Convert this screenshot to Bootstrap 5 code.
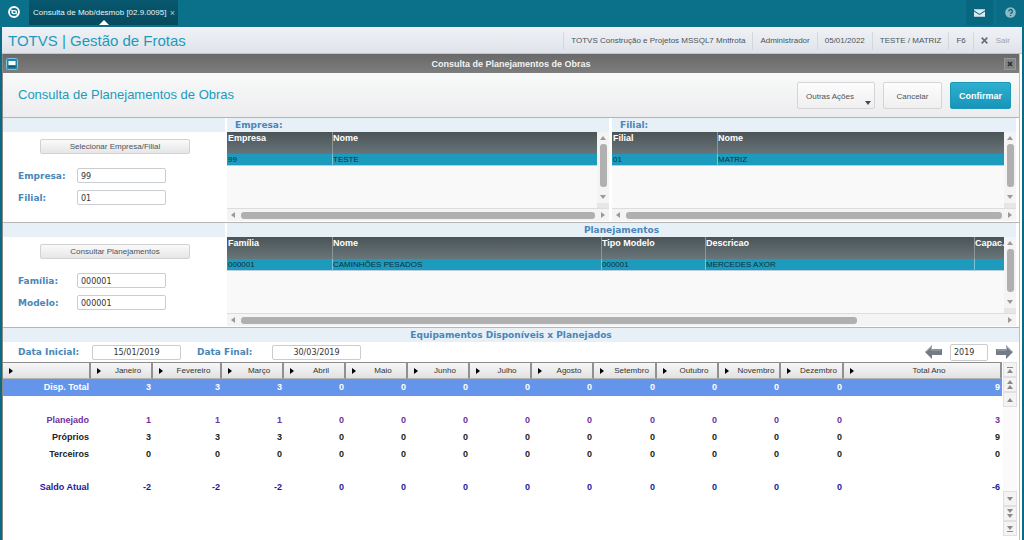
<!DOCTYPE html>
<html lang="pt-BR">
<head>
<meta charset="utf-8">
<meta name="viewport" content="width=device-width, initial-scale=1">
<title>Consulta de Planejamentos de Obras</title>
<link href="https://cdn.jsdelivr.net/npm/bootstrap@5.3.0/dist/css/bootstrap.min.css" rel="stylesheet">
<style>
:root{--teal:#0b718a;--sky:#1c9bbd;--strip:#e7eff7;--line:#b3b6b9;--lbl:#4a86b8}
body{font:8px/12px "Liberation Sans",Arial,sans-serif;color:#4c5459;background:#fff}
svg{display:block}

/* top bar */
.shell{min-height:100vh}
.topbar{height:27px;background:var(--teal);padding-left:8px}
.brand{margin-top:6px}
.tab{width:149px;height:25px;background:linear-gradient(#07586f,#064a5d);color:#e9f4f7;margin-left:9px;padding:0 3px 0 4px}
.tab::after{content:"";position:absolute;left:70px;bottom:0;border:5px solid transparent;border-top:0;border-bottom-color:#fff}
.tab button{font-size:9px;line-height:8px;color:#a9ccd6;padding:0}
.tool{width:27px;height:25px;background:#086780;border:0;padding:0}
.tool + .tool{background:#0a6c85}
.frame{border:solid #0b6a84;border-width:0 2px;background:#fff}
.appbar{height:26px;margin-top:1px;background:linear-gradient(#eff1f5,#e0e4ea);border-bottom:1px solid #c3c7cb}
.appname{font-size:15px;line-height:24px;color:var(--sky);padding-left:6px}
.meta > *{padding:0 7px;border-left:1px solid #d3d8de;line-height:18px;height:18px}
.meta a{color:#9ca3ac;text-decoration:none;padding-right:12px}

/* window */
.win{margin-right:2px;border-left:1px solid #888;border-right:1px solid #b9c2c6}
.wintitle{height:19px;background:linear-gradient(#696969,#7d7d7d);font-weight:700;padding:0 3px}
.wintitle span{font-size:9px;color:#f2f2f2}
.winx{width:12px;height:12px;border:1px solid #989898;background:#838383;padding:0}
.head{height:45px;background:linear-gradient(#f8f9f9,#ededef);border-bottom:1px solid var(--line);padding:0 8px 0 15px}
.head h1{font-size:13px;line-height:16px;color:var(--sky);margin:0;font-weight:400}
.head .btn{font-size:8px;line-height:27px;height:27px;border-radius:2px;border:1px solid #d5d5d7;color:#4c5459;background:linear-gradient(#fdfdfd,#efefef)}
.head .btn-ok{background:linear-gradient(#2fb0d0,#1795b9);border-color:#1c96b9;color:#fff;font-weight:700;font-size:9px}
.head .b-more{width:78px;text-align:left}
.head .b-can{width:59px}
.more{margin:0 3px 3px 0}
.head .more{border-top-color:#444c52}

/* sections */
.sec{border-bottom:1px solid var(--line);min-height:105px}
.side{flex:0 0 222px}
.g-emp{flex:0 0 37.6%;min-width:0;margin:0 3px 0 2px}
.g-fil{flex:1 1 0;min-width:0;margin-right:3px}
.g-plan{flex:1 1 0;min-width:0;margin:0 3px 0 2px}
.band{height:14px;background:var(--strip);color:var(--lbl);font:700 9px/14px "DejaVu Sans",Verdana,sans-serif}
.wide{display:block;width:150px;height:15px;font-size:8px;line-height:13px;border:1px solid #d2d2d4;border-radius:2px;background:linear-gradient(#fafafa,#e6e6e8);color:#4c5459;padding:0;margin:7px 0 14px 37px}
.lab{font:700 9px/14px "DejaVu Sans",Verdana,sans-serif;color:var(--lbl)}
.fld{width:89px;height:15px;border:1px solid #c9cdd1;border-radius:2px;background:#fff;color:#333;font:8px/13px "DejaVu Sans",Verdana,sans-serif;padding:1px 3px 0}
.frow{margin:0 0 7px 15px;height:15px}
.frow .lab{width:59px}

/* record grids */
.gridbody{height:76px;background:#f9f9f9}
.browse{table-layout:fixed;width:100%;border-collapse:separate;border-spacing:0}
.browse th,.browse td{padding:0;white-space:nowrap;overflow:hidden;border-left:1px solid #8c9698}
.browse th{height:22px;background:linear-gradient(#4b5456,#68757a);color:#fff;font-size:9px;line-height:12px;vertical-align:top}
.browse td{height:12px;background:var(--sky);color:#10303c;font-size:8px;line-height:11px;border-color:#7fc1d3;border-bottom:1px solid #bcd}
.browse th:first-child,.browse td:first-child{border-left:0;padding-left:1px}
.c104{width:104px}.c105{width:105px}.c269{width:269px}
.vs{flex:0 0 12px;background:#f4f4f4;padding:4px 0 0;border-bottom:5px solid #e6e6e6}
.hs{height:13px;background:#f4f4f4;border-top:1px solid #ddd;padding:0 4px}
.thumb-v{width:7px;height:43px;border-radius:3px;background:#b0b0b0}
.thumb-h{height:7px;border-radius:3px;background:#b0b0b0}
.hgap{margin:0 6px}
.part{width:81%}
.tri{border:3px solid transparent;width:0;height:0}
.up{border-top:0;border-bottom:4px solid #9a9a9a}
.dn{border-bottom:0;border-top:4px solid #9a9a9a}
.lf{border-left:0;border-right:4px solid #9a9a9a}
.rt{border-right:0;border-left:4px solid #9a9a9a}

/* monthly plan */
.dates{height:20px;padding:0 6px 0 15px}
.l1{width:74px}
.l2{width:75px;margin-left:16px}
.yr{width:38px;height:17px}
.arrow{border:0;background:none;padding:0;line-height:0}
.plan{table-layout:fixed;width:100%;border-collapse:separate;border-spacing:0}
.plan thead th{height:17px;background:linear-gradient(#f7f7f7,#e2e2e2);border-top:1px solid #8b8b8b;border-right:2px solid #909090;border-bottom:1px solid #b5b5b5;font-weight:400;font-size:8px;line-height:14px;color:#333;text-align:center;padding:0 0 0 14px;position:relative}
.plan thead th::before{content:"";position:absolute;left:6px;top:5px;border:3px solid transparent;border-right:0;border-left:4px solid #000}
.plan tbody tr{height:17px}
.plan tbody tr.gap-row{height:16px}
.plan tbody th,.plan tbody td{font-weight:700;font-size:9px;line-height:15px;padding:0 2px 0 0;text-align:right}
.plan .sel > *{background:#6595ea;color:#fff}
.plan .c-plan > *{color:#7030a0}
.plan .c-blk > *{color:#222}
.plan .c-saldo > *{color:#1a1a9c}
.p88{width:88px}.p62{width:62px}.p63{width:63px}.p69{width:69px}
.steps{flex:0 0 14px;background:#fafafa;margin:0 2px 0 1px}
.steps button{width:14px;height:15px;border:1px solid #e0e0e0;background:#f3f3f3;padding:0;display:flex;align-items:center;justify-content:center}
</style>
</head>
<body>
<div class="shell d-flex flex-column">
<nav class="topbar d-flex align-items-start">
  <svg class="brand" width="12" height="12" viewBox="0 0 12 12"><circle cx="6" cy="6" r="5" fill="none" stroke="#fff" stroke-width="1.800"/><ellipse cx="6.200" cy="6.100" rx="2.300" ry="1.500" fill="none" stroke="#fff" stroke-width="1.300"/><path d="M1.500 3.500L5 4.700M7.500 7.500L10.500 8.500" stroke="#fff" stroke-width="1.200"/></svg>
  <div class="tab position-relative d-flex align-items-center justify-content-between"><span>Consulta de Mob/desmob [02.9.0095]</span><button class="btn border-0" aria-label="Fechar aba">×</button></div>
  <div class="ms-auto d-flex gap-1">
    <button class="tool d-flex align-items-center justify-content-center" aria-label="Mensagens"><svg width="11" height="8" viewBox="0 0 12 8"><path d="M0 0h12v1L6 5 0 1zM0 2.300l6 4 6-4V8H0z" fill="#dcebf0"/></svg></button>
    <button class="tool d-flex align-items-center justify-content-center" aria-label="Ajuda"><svg width="11" height="11" viewBox="0 0 11 11"><circle cx="5.500" cy="5.500" r="5.300" fill="#8dbac7"/><path d="M3.800 4.400a1.800 1.800 0 1 1 2.600 1.500c-.6.3-.8.5-.8 1.100M5.600 8v1.100" fill="none" stroke="#086780" stroke-width="1.300"/></svg></button>
  </div>
</nav>
<div class="frame flex-grow-1 d-flex flex-column">
<header class="appbar d-flex align-items-center justify-content-between">
  <span class="appname">TOTVS | Gestão de Frotas</span>
  <div class="meta d-flex">
    <span>TOTVS Construção e Projetos MSSQL7 Mntfrota</span><span>Administrador</span><span>05/01/2022</span><span>TESTE / MATRIZ</span><span>F6</span>
    <a href="#" class="d-flex align-items-center gap-2"><svg width="7" height="7" viewBox="0 0 7 7"><path d="M.7.7l5.600 5.600M6.300.7L.7 6.300" stroke="#68707a" stroke-width="1.700"/></svg>Sair</a>
  </div>
</header>
<main class="win flex-grow-1 d-flex flex-column">
  <div class="wintitle d-flex align-items-center justify-content-between">
    <svg width="12" height="12" viewBox="0 0 12 12"><rect x=".5" y=".5" width="11" height="11" rx="1" fill="#1c87a8" stroke="#7cc3d8"/><path d="M2.500 3h7v4h-7z" fill="#fff"/><path d="M2.500 8h7v1.500h-7z" fill="#0c5b76"/></svg>
    <span>Consulta de Planejamentos de Obras</span>
    <button class="winx d-flex align-items-center justify-content-center" aria-label="Fechar"><svg width="6" height="6" viewBox="0 0 6 6"><path d="M1 1l4 4M5 1L1 5" stroke="#222c3a" stroke-width="1.600"/></svg></button>
  </div>
  <div class="head d-flex align-items-center justify-content-between">
    <h1>Consulta de Planejamentos de Obras</h1>
    <div class="d-flex gap-2">
      <button class="btn position-relative py-0 ps-2 b-more">Outras Ações<span class="tri dn position-absolute bottom-0 end-0 more"></span></button>
      <button class="btn py-0 b-can">Cancelar</button>
      <button class="btn btn-ok py-0 px-2">Confirmar</button>
    </div>
  </div>

  <section class="sec d-flex">
    <div class="side">
      <div class="band"></div>
      <button class="wide">Selecionar Empresa/Filial</button>
      <div class="frow d-flex align-items-center"><label class="lab" for="emp">Empresa:</label><input class="fld" id="emp" value="99"></div>
      <div class="frow d-flex align-items-center"><label class="lab" for="fil">Filial:</label><input class="fld" id="fil" value="01"></div>
    </div>
    <div class="g-emp">
      <div class="band ps-2">Empresa:</div>
      <div class="gridbody d-flex">
        <div class="flex-fill overflow-hidden"><table class="browse"><colgroup><col class="c105"><col></colgroup><thead><tr><th>Empresa</th><th>Nome</th></tr></thead><tbody><tr><td>99</td><td>TESTE</td></tr></tbody></table></div>
        <div class="vs d-flex flex-column align-items-center"><span class="tri up"></span><span class="thumb-v my-1"></span><span class="tri dn mt-1"></span></div>
      </div>
      <div class="hs d-flex align-items-center"><span class="tri lf"></span><span class="thumb-h flex-grow-1 hgap"></span><span class="tri rt"></span></div>
    </div>
    <div class="g-fil">
      <div class="band ps-2">Filial:</div>
      <div class="gridbody d-flex">
        <div class="flex-fill overflow-hidden"><table class="browse"><colgroup><col class="c105"><col></colgroup><thead><tr><th>Filial</th><th>Nome</th></tr></thead><tbody><tr><td>01</td><td>MATRIZ</td></tr></tbody></table></div>
        <div class="vs d-flex flex-column align-items-center"><span class="tri up"></span><span class="thumb-v my-1"></span><span class="tri dn mt-1"></span></div>
      </div>
      <div class="hs d-flex align-items-center"><span class="tri lf"></span><span class="thumb-h flex-grow-1 hgap"></span><span class="tri rt"></span></div>
    </div>
  </section>

  <section class="sec d-flex">
    <div class="side">
      <div class="band"></div>
      <button class="wide">Consultar Planejamentos</button>
      <div class="frow d-flex align-items-center"><label class="lab" for="fam">Família:</label><input class="fld" id="fam" value="000001"></div>
      <div class="frow d-flex align-items-center"><label class="lab" for="mod">Modelo:</label><input class="fld" id="mod" value="000001"></div>
    </div>
    <div class="g-plan">
      <div class="band text-center">Planejamentos</div>
      <div class="gridbody d-flex">
        <div class="flex-fill overflow-hidden"><table class="browse"><colgroup><col class="c105"><col class="c269"><col class="c104"><col class="c269"><col></colgroup><thead><tr><th>Família</th><th>Nome</th><th>Tipo Modelo</th><th>Descricao</th><th>Capac.</th></tr></thead><tbody><tr><td>000001</td><td>CAMINHÕES PESADOS</td><td>000001</td><td>MERCEDES AXOR</td><td></td></tr></tbody></table></div>
        <div class="vs d-flex flex-column align-items-center"><span class="tri up"></span><span class="thumb-v my-1"></span><span class="tri dn mt-1"></span></div>
      </div>
      <div class="hs d-flex align-items-center"><span class="tri lf"></span><div class="flex-grow-1 hgap"><div class="thumb-h part"></div></div><span class="tri rt"></span></div>
    </div>
  </section>

  <section class="flex-grow-1 d-flex flex-column">
    <div class="band text-center">Equipamentos Disponíveis x Planejados</div>
    <div class="dates d-flex align-items-center">
      <label class="lab l1" for="di">Data Inicial:</label><input class="fld text-center" id="di" value="15/01/2019">
      <label class="lab l2" for="df">Data Final:</label><input class="fld text-center" id="df" value="30/03/2019">
      <div class="ms-auto d-flex align-items-center gap-2">
        <button class="arrow" aria-label="Ano anterior"><svg width="17" height="14" viewBox="0 0 17 14"><path d="M0 7l7-7v4h10v6H7v4z" fill="#737b87"/><path d="M1.500 6.500L6.500 1.500V5H16" fill="none" stroke="#a6adb6"/></svg></button>
        <input class="fld yr" value="2019" aria-label="Ano">
        <button class="arrow" aria-label="Próximo ano"><svg width="17" height="14" viewBox="0 0 17 14"><path d="M17 7l-7-7v4H0v6h10v4z" fill="#737b87"/><path d="M15.500 6.500l-5-5V5H1" fill="none" stroke="#a6adb6"/></svg></button>
      </div>
    </div>
    <div class="flex-grow-1 d-flex pb-1">
      <div class="flex-fill"><table class="plan">
        <colgroup><col class="p88"><col class="p62"><col class="p69"><col class="p62"><col class="p62"><col class="p62"><col class="p62"><col class="p62"><col class="p62"><col class="p63"><col class="p62"><col class="p62"><col class="p63"><col></colgroup>
        <thead><tr><th aria-label="Linha"></th><th>Janeiro</th><th>Fevereiro</th><th>Março</th><th>Abril</th><th>Maio</th><th>Junho</th><th>Julho</th><th>Agosto</th><th>Setembro</th><th>Outubro</th><th>Novembro</th><th>Dezembro</th><th>Total Ano</th></tr></thead>
        <tbody>
        <tr class="sel"><th>Disp. Total</th><td>3</td><td>3</td><td>3</td><td>0</td><td>0</td><td>0</td><td>0</td><td>0</td><td>0</td><td>0</td><td>0</td><td>0</td><td>9</td></tr>
        <tr class="gap-row"><td colspan="14"></td></tr>
        <tr class="c-plan"><th>Planejado</th><td>1</td><td>1</td><td>1</td><td>0</td><td>0</td><td>0</td><td>0</td><td>0</td><td>0</td><td>0</td><td>0</td><td>0</td><td>3</td></tr>
        <tr class="c-blk"><th>Próprios</th><td>3</td><td>3</td><td>3</td><td>0</td><td>0</td><td>0</td><td>0</td><td>0</td><td>0</td><td>0</td><td>0</td><td>0</td><td>9</td></tr>
        <tr class="c-blk"><th>Terceiros</th><td>0</td><td>0</td><td>0</td><td>0</td><td>0</td><td>0</td><td>0</td><td>0</td><td>0</td><td>0</td><td>0</td><td>0</td><td>0</td></tr>
        <tr class="gap-row"><td colspan="14"></td></tr>
        <tr class="c-saldo"><th>Saldo Atual</th><td>-2</td><td>-2</td><td>-2</td><td>0</td><td>0</td><td>0</td><td>0</td><td>0</td><td>0</td><td>0</td><td>0</td><td>0</td><td>-6</td></tr>
        </tbody>
      </table></div>
      <div class="steps d-flex flex-column">
        <button aria-label="Primeiro"><svg width="6" height="6"><path d="M0 0h6v1H0zM3 2l3 4H0z" fill="#8a8a8a"/></svg></button>
        <button aria-label="Página acima"><svg width="6" height="9"><path d="M3 0l3 4H0zM3 5l3 4H0z" fill="#8a8a8a"/></svg></button>
        <button aria-label="Acima"><svg width="6" height="4"><path d="M3 0l3 4H0z" fill="#8a8a8a"/></svg></button>
        <button class="mt-auto" aria-label="Abaixo"><svg width="6" height="4"><path d="M0 0h6L3 4z" fill="#8a8a8a"/></svg></button>
        <button aria-label="Página abaixo"><svg width="6" height="9"><path d="M0 0h6L3 4zM0 5h6L3 9z" fill="#8a8a8a"/></svg></button>
        <button aria-label="Último"><svg width="6" height="6"><path d="M0 0h6L3 4zM0 5h6v1H0z" fill="#8a8a8a"/></svg></button>
      </div>
    </div>
  </section>
</main>
</div>
</div>
<script src="https://cdn.jsdelivr.net/npm/bootstrap@5.3.0/dist/js/bootstrap.bundle.min.js"></script>
</body>
</html>
